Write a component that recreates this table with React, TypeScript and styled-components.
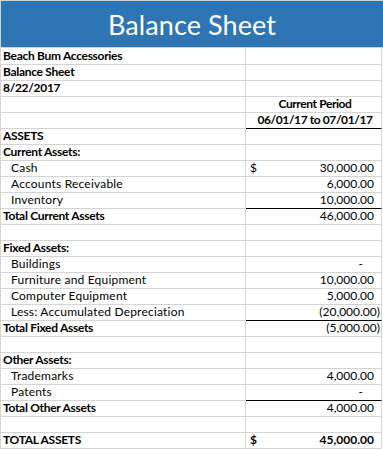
import React from "react";
import styled, { createGlobalStyle } from "styled-components";

const Global = createGlobalStyle`
  html, body { margin: 0; padding: 0; background: #ffffff; }
  body { font-family: Lato, "Open Sans", sans-serif; color: #000; }
`;

const GRID = "#d4d4d4";

const Sheet = styled.div`
  width: 383px;
  border-top: 1px solid ${GRID};
`;

const Banner = styled.header`
  box-sizing: border-box;
  height: 47px;
  background: #2e75b6;
  border-left: 1px solid ${GRID};
  border-bottom: 1px solid ${GRID};
  display: flex;
  align-items: center;
  justify-content: center;
  color: #ffffff;
  font-family: Lato, "Open Sans", sans-serif;
  font-size: 27px;
  font-weight: 400;
  letter-spacing: 0.1px;
  line-height: 1;
`;

const Table = styled.div`
  display: grid;
  width: 381px;
  grid-template-columns: 245px 136px;
  grid-template-rows: 17px;
  grid-auto-rows: 16px;
  border-left: 1px solid ${GRID};
`;

const Cell = styled.div<{ $rule?: boolean }>`
  box-sizing: border-box;
  border-right: 1px solid ${GRID};
  border-bottom: 1px solid ${(p) => (p.$rule ? "#000" : GRID)};
  display: flex;
  align-items: flex-end;
  padding-bottom: 1px;
  white-space: nowrap;
  overflow: hidden;
  font-size: 12px;
  line-height: 14px;
`;

type Kind = "bold" | "item" | "none";

const LabelCell = styled(Cell)<{ $kind: Kind }>`
  padding-left: ${(p) => (p.$kind === "item" ? "10px" : "2px")};
  font-weight: ${(p) => (p.$kind === "bold" ? 700 : 400)};
  letter-spacing: ${(p) => (p.$kind === "bold" ? "-0.3px" : "0.2px")};
`;

const ValueCell = styled(Cell)<{ $center?: boolean; $bold?: boolean }>`
  justify-content: ${(p) => (p.$center ? "center" : "space-between")};
  padding-left: 4px;
  padding-right: 1px;
  font-weight: ${(p) => (p.$bold ? 700 : 400)};
  letter-spacing: ${(p) => (p.$center ? "-0.4px" : "0")};
`;

const Dollar = styled.span`
  font-weight: inherit;
`;

const Amount = styled.span`
  margin-left: auto;
  display: inline-flex;
`;

const Pad = styled.span<{ $w: number }>`
  display: inline-block;
  width: ${(p) => p.$w}px;
`;

interface Row {
  label?: string;
  kind?: Kind;
  head?: string;
  value?: string;
  dollar?: boolean;
  rule?: boolean;
  strong?: boolean;
}

const rows: Row[] = [
  { label: "Beach Bum Accessories", kind: "bold" },
  { label: "Balance Sheet", kind: "bold" },
  { label: "8/22/2017", kind: "bold" },
  { head: "Current Period" },
  { head: "06/01/17 to 07/01/17", rule: true },
  { label: "ASSETS", kind: "bold" },
  { label: "Current Assets:", kind: "bold" },
  { label: "Cash", kind: "item", dollar: true, value: "30,000.00" },
  { label: "Accounts Receivable", kind: "item", value: "6,000.00" },
  { label: "Inventory", kind: "item", value: "10,000.00", rule: true },
  { label: "Total Current Assets", kind: "bold", value: "46,000.00" },
  {},
  { label: "Fixed Assets:", kind: "bold" },
  { label: "Buildings", kind: "item", value: "0" },
  { label: "Furniture and Equipment", kind: "item", value: "10,000.00" },
  { label: "Computer Equipment", kind: "item", value: "5,000.00" },
  { label: "Less: Accumulated Depreciation", kind: "item", value: "-20,000.00", rule: true },
  { label: "Total Fixed Assets", kind: "bold", value: "-5,000.00" },
  {},
  { label: "Other Assets:", kind: "bold" },
  { label: "Trademarks", kind: "item", value: "4,000.00" },
  { label: "Patents", kind: "item", value: "0", rule: true },
  { label: "Total Other Assets", kind: "bold", value: "4,000.00" },
  {},
  { label: "TOTAL ASSETS", kind: "bold", dollar: true, value: "45,000.00", strong: true },
];

function Money({ value }: { value: string }) {
  if (value === "0") {
    return (
      <Amount>
        -<Pad $w={17} />
      </Amount>
    );
  }
  if (value.startsWith("-")) {
    return <Amount>({value.slice(1)})</Amount>;
  }
  return (
    <Amount>
      {value}
      <Pad $w={6} />
    </Amount>
  );
}

export default function App() {
  return (
    <>
      <Global />
      <Sheet>
        <Banner>Balance Sheet</Banner>
        <Table>
          {rows.map((r, i) => (
            <React.Fragment key={i}>
              <LabelCell $kind={r.kind ?? "none"}>{r.label}</LabelCell>
              {r.head ? (
                <ValueCell $center $bold $rule={r.rule}>
                  {r.head}
                </ValueCell>
              ) : (
                <ValueCell $rule={r.rule} $bold={r.strong}>
                  {r.dollar && <Dollar>$</Dollar>}
                  {r.value && <Money value={r.value} />}
                </ValueCell>
              )}
            </React.Fragment>
          ))}
        </Table>
      </Sheet>
    </>
  );
}
